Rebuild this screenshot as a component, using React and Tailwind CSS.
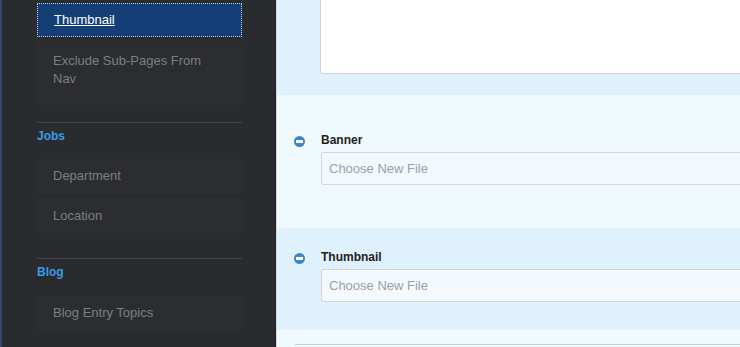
import React from 'react';

const font = { fontFamily: '"Liberation Sans", Arial, sans-serif' };

function NavItem({ label, active, tall }) {
  if (active) {
    return (
      <div className="h-[34px] flex items-center px-[16px] bg-[#143e76] border border-dotted border-[#c9d3e0]">
        <span className="text-[13px] text-white underline">{label}</span>
      </div>
    );
  }
  return (
    <div className={`${tall ? 'pt-[11px] pb-[18px]' : 'h-[36px] flex items-center'} px-[16px] bg-[#2c2d31] text-[13px] leading-[18px] text-[#7a7e84]`}>
      {label}
    </div>
  );
}

function Field({ label }) {
  return (
    <div className="flex items-start">
      <div className="w-[44px] flex justify-end pr-[16px] pt-[3px]">
        <span className="w-[11px] h-[11px] rounded-full bg-[#3b86c9] flex items-center justify-center">
          <span className="w-[7px] h-[3px] bg-white"></span>
        </span>
      </div>
      <div className="flex-1">
        <div className="text-[12px] font-bold text-[#222] leading-[14px] mb-[5px]">{label}</div>
        <div className="h-[33px] rounded-l-[3px] border border-r-0 border-[#d0d6db] bg-[#f4f9fd] flex items-center px-[7px] text-[13px] text-[#9aa0a5]">
          Choose New File
        </div>
      </div>
    </div>
  );
}

export default function App() {
  return (
    <div className="w-[740px] h-[347px] overflow-hidden flex" style={font}>
      <aside className="w-[276px] shrink-0 bg-[#2a2b2f] border-l-[2px] border-[#2b4a6e] border-r border-r-[#1d1e21] pl-[35px] pr-[33px] pt-[3px]">
        <div className="flex flex-col gap-[4px]">
          <NavItem label="Thumbnail" active />
          <NavItem label={<>Exclude Sub-Pages From<br />Nav</>} tall />
        </div>
        <div className="mt-[16px] border-t border-[#434448] pt-[6px]">
          <div className="text-[12px] font-bold text-[#3a9be3] leading-[14px]">Jobs</div>
          <div className="mt-[15px] flex flex-col gap-[4px]">
            <NavItem label="Department" />
            <NavItem label="Location" />
          </div>
        </div>
        <div className="mt-[24px] border-t border-[#434448] pt-[6px]">
          <div className="text-[12px] font-bold text-[#3a9be3] leading-[14px]">Blog</div>
          <div className="mt-[16px] flex flex-col gap-[4px]">
            <NavItem label="Blog Entry Topics" />
          </div>
        </div>
      </aside>
      <main className="flex-1 border-l border-[#d6dde3] flex flex-col">
        <section className="h-[95px] shrink-0 bg-[#dff1fd] pl-[43px]">
          <div className="h-[74px] bg-white border-l border-b border-[#cfd4d8] rounded-bl-[2px]"></div>
        </section>
        <section className="h-[133px] shrink-0 bg-[#f0f9fe] pt-[38px]">
          <Field label="Banner" />
        </section>
        <section className="h-[102px] shrink-0 bg-[#dff1fd] pt-[22px]">
          <Field label="Thumbnail" />
        </section>
        <section className="flex-1 bg-[#f0f9fe] pl-[18px] pt-[14px]">
          <div className="border-t border-[#c9cdd1]"></div>
        </section>
      </main>
    </div>
  );
}
